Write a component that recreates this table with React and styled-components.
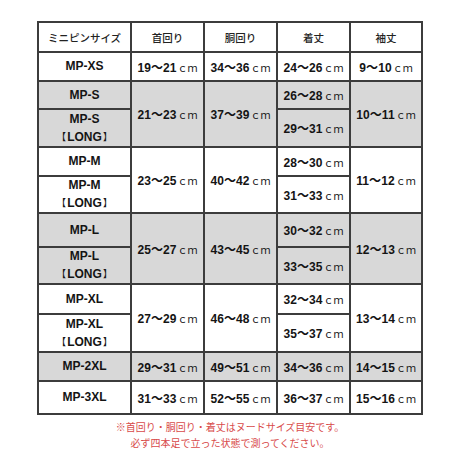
import React from 'react'
import styled, { createGlobalStyle } from 'styled-components'

const GlobalStyle = createGlobalStyle`
  html, body {
    margin: 0;
    padding: 0;
    background: #ffffff;
  }
`

const Page = styled.div`
  width: 460px;
  height: 460px;
  box-sizing: border-box;
  padding: 21px 37px 0;
  font-family: "Liberation Sans", "Noto Sans CJK JP", sans-serif;
`

const Table = styled.div`
  display: grid;
  grid-template-columns: 91px 71px 71px 71px 70px;
  grid-template-rows: 28px 27px 26px 36px 27px 35px 32px 35px 28px 36px 27px 31px;
  gap: 2px;
  padding: 2px;
  background: #3c3c3c;
  width: 386px;
  box-sizing: border-box;
`

const Cell = styled.div`
  grid-row: span ${p => p.$span || 1};
  background: ${p => (p.$gray ? '#d8d8d8' : '#ffffff')};
  display: flex;
  align-items: center;
  justify-content: center;
  text-align: center;
  color: #141414;
`

const Head = styled(Cell)`
  font-family: "Noto Sans CJK JP", sans-serif;
  font-size: 10.5px;
  font-weight: 500;
  color: #222;
`

const Size = styled.div`
  font-size: 12px;
  font-weight: 700;
  line-height: 17px;
`

const Bracket = styled.span`
  font-family: "Noto Sans CJK JP", sans-serif;
  font-size: 10px;
  font-weight: 300;
  margin: ${p => (p.$open ? '0 1px 0 -4px' : '0 -4px 0 1px')};
`

const Num = styled.span`
  font-size: 12px;
  font-weight: 700;
  letter-spacing: 0.1px;
`

const Unit = styled.span`
  font-family: "Noto Sans CJK JP", sans-serif;
  font-size: 10px;
  font-weight: 400;
  margin-left: 1px;
`

const Notes = styled.div`
  margin-top: 4px;
  text-align: center;
  font-family: "Noto Sans CJK JP", sans-serif;
  font-size: 10px;
  line-height: 16px;
  color: #d84a4a;
`

const groups = [
  { gray: false, sizes: ['MP-XS'], neck: '19～21', chest: '34～36', length: ['24～26'], sleeve: '9～10' },
  { gray: true, sizes: ['MP-S', 'MP-S*'], neck: '21～23', chest: '37～39', length: ['26～28', '29～31'], sleeve: '10～11' },
  { gray: false, sizes: ['MP-M', 'MP-M*'], neck: '23～25', chest: '40～42', length: ['28～30', '31～33'], sleeve: '11～12' },
  { gray: true, sizes: ['MP-L', 'MP-L*'], neck: '25～27', chest: '43～45', length: ['30～32', '33～35'], sleeve: '12～13' },
  { gray: false, sizes: ['MP-XL', 'MP-XL*'], neck: '27～29', chest: '46～48', length: ['32～34', '35～37'], sleeve: '13～14' },
  { gray: true, sizes: ['MP-2XL'], neck: '29～31', chest: '49～51', length: ['34～36'], sleeve: '14～15' },
  { gray: false, sizes: ['MP-3XL'], neck: '31～33', chest: '52～55', length: ['36～37'], sleeve: '15～16' },
]

const Value = ({ v }) => (
  <span>
    <Num>{v}</Num>
    <Unit>ｃｍ</Unit>
  </span>
)

// "*" marks the long-body variant
const SizeLabel = ({ s }) => {
  const long = s.endsWith('*')
  return (
    <Size>
      <div>{long ? s.slice(0, -1) : s}</div>
      {long && (
        <div>
          <Bracket $open>【</Bracket>LONG<Bracket>】</Bracket>
        </div>
      )}
    </Size>
  )
}

const App = () => {
  const cells = []
  groups.forEach((g, gi) => {
    const span = g.sizes.length
    g.sizes.forEach((s, i) => {
      cells.push(
        <Cell key={`s${gi}-${i}`} $gray={g.gray}>
          <SizeLabel s={s} />
        </Cell>
      )
      if (i === 0) {
        cells.push(
          <Cell key={`n${gi}`} $gray={g.gray} $span={span}>
            <Value v={g.neck} />
          </Cell>,
          <Cell key={`c${gi}`} $gray={g.gray} $span={span}>
            <Value v={g.chest} />
          </Cell>
        )
      }
      cells.push(
        <Cell key={`l${gi}-${i}`} $gray={g.gray}>
          <Value v={g.length[i]} />
        </Cell>
      )
      if (i === 0) {
        cells.push(
          <Cell key={`v${gi}`} $gray={g.gray} $span={span}>
            <Value v={g.sleeve} />
          </Cell>
        )
      }
    })
  })

  return (
    <Page>
      <GlobalStyle />
      <Table>
        <Head>ミニピンサイズ</Head>
        <Head>首回り</Head>
        <Head>胴回り</Head>
        <Head>着丈</Head>
        <Head>袖丈</Head>
        {cells}
      </Table>
      <Notes>
        <div>※首回り・胴回り・着丈はヌードサイズ目安です。</div>
        <div>必ず四本足で立った状態で測ってください。</div>
      </Notes>
    </Page>
  )
}

export default App
